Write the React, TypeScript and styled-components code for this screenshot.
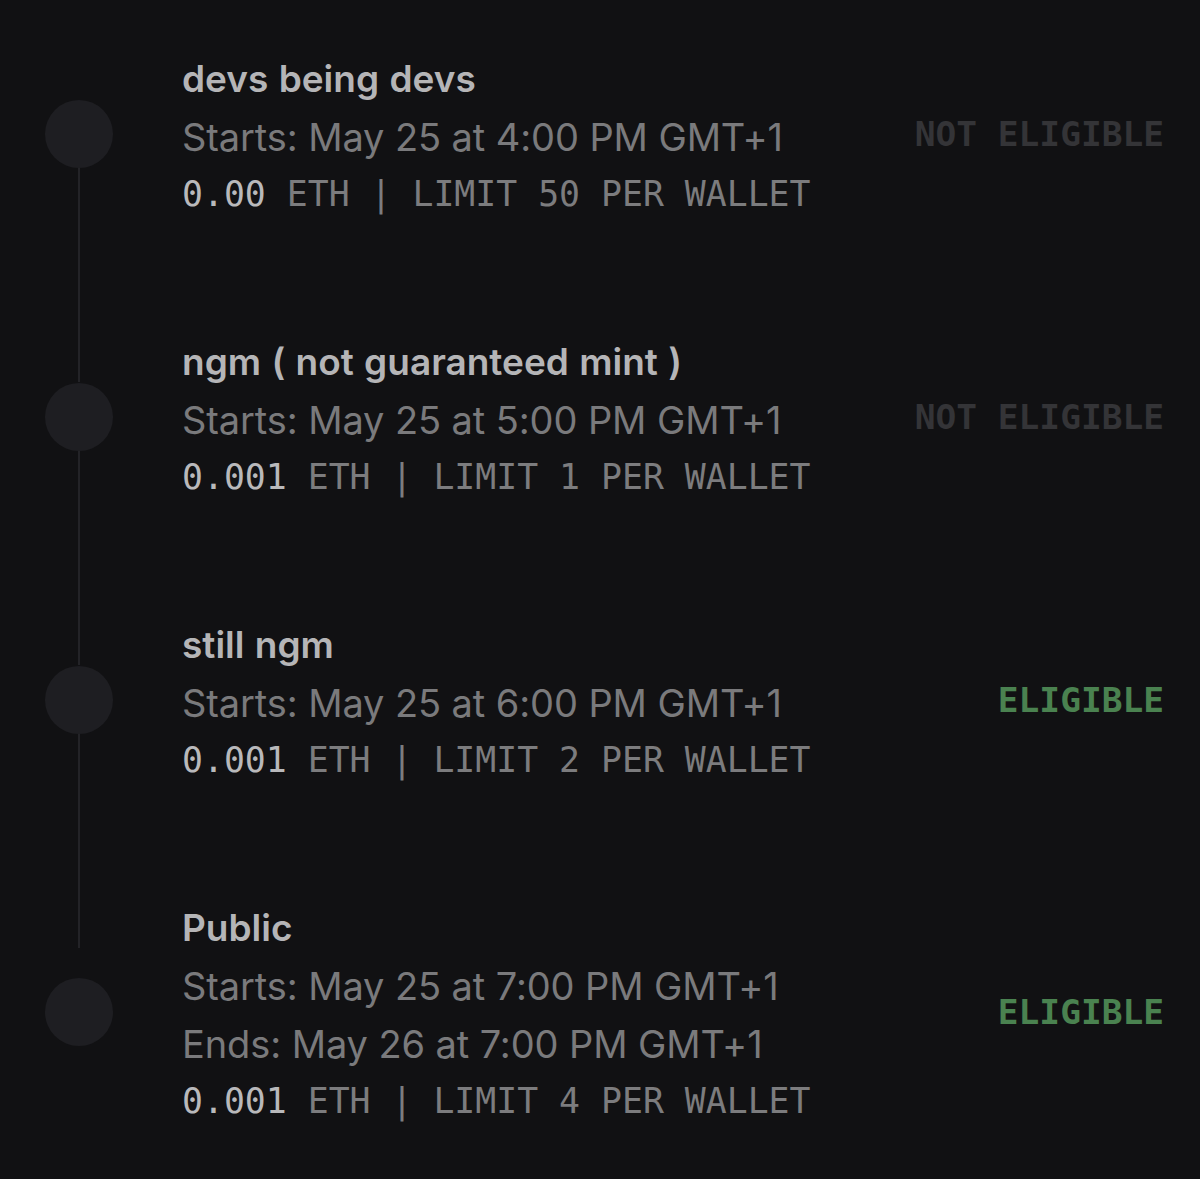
import React from 'react';
import styled, { createGlobalStyle } from 'styled-components';

const GlobalStyle = createGlobalStyle`
  html, body {
    margin: 0;
    padding: 0;
    background: #111113;
  }
  body {
    font-family: Inter, "Noto Sans", sans-serif;
    -webkit-font-smoothing: antialiased;
  }
`;

type Phase = {
  name: string;
  starts: string;
  ends?: string;
  price: string;
  limit: number;
  eligible: boolean;
};

const phases: Phase[] = [
  { name: 'devs being devs', starts: 'May 25 at 4:00 PM GMT+1', price: '0.00', limit: 50, eligible: false },
  { name: 'ngm ( not guaranteed mint )', starts: 'May 25 at 5:00 PM GMT+1', price: '0.001', limit: 1, eligible: false },
  { name: 'still ngm', starts: 'May 25 at 6:00 PM GMT+1', price: '0.001', limit: 2, eligible: true },
  {
    name: 'Public',
    starts: 'May 25 at 7:00 PM GMT+1',
    ends: 'May 26 at 7:00 PM GMT+1',
    price: '0.001',
    limit: 4,
    eligible: true,
  },
];

const Page = styled.div`
  width: 1200px;
  height: 1179px;
  box-sizing: border-box;
  padding: 50px 36px 0 45px;
  background: #111113;
  overflow: hidden;
`;

const Timeline = styled.ol`
  list-style: none;
  margin: 0;
  padding: 0;
  display: flex;
  flex-direction: column;
  gap: 111px;
`;

const Row = styled.li`
  display: flex;
  align-items: center;
`;

const Marker = styled.div<{ $connector: boolean }>`
  position: relative;
  flex: 0 0 68px;
  height: 68px;
  margin-top: -4px;
  margin-right: 69px;

  &::before {
    content: '';
    display: ${p => (p.$connector ? 'block' : 'none')};
    position: absolute;
    left: 33px;
    top: 34px;
    width: 2px;
    height: 248px;
    background: #232327;
  }
`;

const Dot = styled.div`
  position: relative;
  width: 68px;
  height: 68px;
  border-radius: 50%;
  background: #1e1e22;
`;

const Details = styled.div`
  flex: 1;
  display: flex;
  flex-direction: column;
`;

const Title = styled.div`
  font-size: 37px;
  font-weight: 600;
  line-height: 58px;
  color: #b5b5b7;
  word-spacing: 1px;
`;

const DateLine = styled.div`
  font-size: 38px;
  font-weight: 400;
  line-height: 58px;
  color: #7a7a7c;
  letter-spacing: -0.1px;
`;

const Terms = styled.div`
  font-family: "DejaVu Sans Mono", "Liberation Mono", monospace;
  font-size: 34.8px;
  line-height: 56px;
  color: #7c7c7e;
  white-space: pre;
`;

const Price = styled.span`
  color: #b9b9bb;
`;

const Status = styled.div<{ $eligible: boolean }>`
  font-family: "DejaVu Sans Mono", "Liberation Mono", monospace;
  font-size: 34.5px;
  font-weight: 700;
  line-height: 56px;
  margin-top: -4px;
  white-space: pre;
  color: ${p => (p.$eligible ? '#4a8250' : '#343437')};
`;

export default function App() {
  return (
    <Page>
      <GlobalStyle />
      <Timeline>
        {phases.map((phase, i) => (
          <Row key={phase.name}>
            <Marker $connector={i < phases.length - 1}>
              <Dot />
            </Marker>
            <Details>
              <Title>{phase.name}</Title>
              <DateLine>Starts: {phase.starts}</DateLine>
              {phase.ends && <DateLine>Ends: {phase.ends}</DateLine>}
              <Terms>
                <Price>{phase.price}</Price> ETH | LIMIT {phase.limit} PER WALLET
              </Terms>
            </Details>
            <Status $eligible={phase.eligible}>{phase.eligible ? 'ELIGIBLE' : 'NOT ELIGIBLE'}</Status>
          </Row>
        ))}
      </Timeline>
    </Page>
  );
}
